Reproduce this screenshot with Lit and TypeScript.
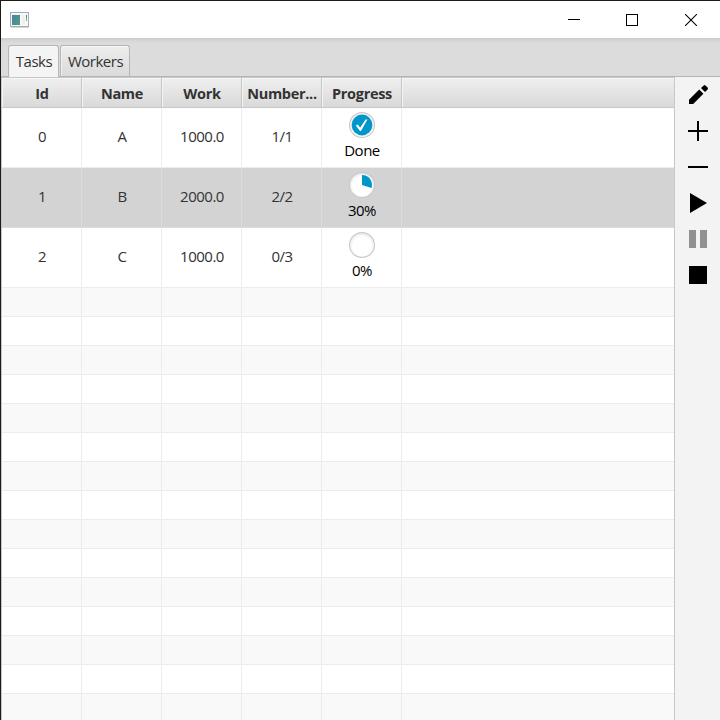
import { LitElement, html, css, svg, nothing } from "lit";
import { customElement, property } from "lit/decorators.js";

interface Task {
  id: number;
  name: string;
  work: string;
  workers: string;
  progress: number;
}

const TASKS: Task[] = [
  { id: 0, name: "A", work: "1000.0", workers: "1/1", progress: 100 },
  { id: 1, name: "B", work: "2000.0", workers: "2/2", progress: 30 },
  { id: 2, name: "C", work: "1000.0", workers: "0/3", progress: 0 },
];

const COLUMNS = ["Id", "Name", "Work", "Number...", "Progress"];
const EMPTY_ROWS = Array.from({ length: 15 }, (_, i) => i);

@customElement("progress-dial")
export class ProgressDial extends LitElement {
  @property({ type: Number }) value = 0;

  static styles = css`
    :host { display: flex; flex-direction: column; align-items: center; color: #000; }
    svg { display: block; width: 28px; height: 28px; margin-top: 3px; }
    .label { line-height: 20px; margin-top: 1px; height: 20px; }
  `;

  private sector() {
    const a = (this.value / 100) * Math.PI * 2;
    const x = 14 + 10 * Math.sin(a);
    const y = 14 - 10 * Math.cos(a);
    return `M14 14V4A10 10 0 ${this.value > 50 ? 1 : 0} 1 ${x} ${y}Z`;
  }

  render() {
    const done = this.value >= 100;
    return html`
      <svg viewBox="0 0 28 28">
        <defs>
          <radialGradient id="well" cx="14" cy="15" r="13" gradientUnits="userSpaceOnUse">
            <stop offset="0.72" stop-color="#fff" />
            <stop offset="1" stop-color="#e6e6e6" />
          </radialGradient>
        </defs>
        <circle cx="14" cy="14" r="13" fill="#c8c8c8" />
        <circle cx="14" cy="14" r="12" fill="url(#well)" />
        ${done
          ? svg`<circle cx="14" cy="14" r="10.4" fill="#0096c9" />
              <path d="M7.8 14.6L9.8 13.6L12.1 16.8L17.6 8.6H19.4L13 20H12Z" fill="#fff" />`
          : this.value > 0
            ? svg`<path d=${this.sector()} fill="#0096c9" />`
            : nothing}
      </svg>
      <span class="label">${done ? "Done" : `${this.value}%`}</span>
    `;
  }
}

@customElement("app-root")
export class AppRoot extends LitElement {
  static styles = css`
    :host {
      display: flex; flex-direction: column; box-sizing: border-box;
      width: 720px; height: 720px; overflow: hidden;
      border-top: 1px solid #1b1b1b; border-left: 1px solid #1b1b1b;
      background: #f3f3f3; color: #333;
      font: 15px "Open Sans", "Noto Sans", sans-serif; letter-spacing: -0.5px;
    }
    svg { display: block; }
    .titlebar { flex: none; height: 37px; display: flex; align-items: center; background: #fff; }
    .app-icon { margin-left: 9px; margin-right: auto; }
    .winbtn { width: 58.5px; display: flex; justify-content: center; }
    .tabs {
      flex: none; height: 39px; box-sizing: border-box; display: flex; align-items: flex-end;
      gap: 1px; padding-left: 7px; border-bottom: 1px solid #b5b5b5;
      background: linear-gradient(#cdcdcd, #dcdcdc 5px);
    }
    .tab {
      box-sizing: border-box; height: 31px; line-height: 31px; text-align: center; padding-left: 1px;
      border: 1px solid #b5b5b5; border-bottom: 0; border-radius: 3px 3px 0 0;
      background: linear-gradient(#eee, #dadada); box-shadow: inset 0 1px #f8f8f8, inset 1px 0 #f0f0f0;
    }
    .tab.active { height: 32px; margin-bottom: -1px; background: #f4f4f4; }
    .t0 { width: 51px; }
    .t1 { width: 70px; letter-spacing: -0.5px; }
    .main { flex: 1; display: flex; min-height: 0; }
    .table {
      width: 674px; box-sizing: border-box; overflow: hidden; background: #fff;
      border-left: 1px solid #c8c8c8; border-right: 1px solid #c8c8c8; border-top: 1px solid #c8c8c8;
    }
    .row { display: grid; grid-template-columns: repeat(5, 80px) 1fr; box-sizing: border-box; }
    .row > div { box-sizing: border-box; text-align: center; border-right: 1px solid #ececec; padding-left: 1px; min-width: 0; }
    .row > div:last-child { border-right: 0; }
    .head {
      height: 30px; border-bottom: 1px solid #c8c8c8; line-height: 31px; font-weight: 700;
      font-size: 14.5px;
      background: linear-gradient(#efefef, #d9d9d9);
    }
    .head > div { border-right-color: #c5c5c5; box-shadow: inset 1px 1px #f6f6f6; height: 29px; letter-spacing: -0.3px; }
    .task { height: 60px; border-bottom: 1px solid #ececec; line-height: 56px; }
    .task.selected { background: #d3d3d3; border-bottom-color: #dcdcdc; }
    .task.selected > div { border-right-color: #dcdcdc; }
    .empty { height: 29px; border-bottom: 1px solid #ececec; }
    .empty.odd { background: #f9f9f9; }
    .tools { flex: 1; display: flex; flex-direction: column; align-items: center; }
    .tools svg { width: 36px; height: 36px; }
  `;

  render() {
    return html`
      <div class="titlebar">
        <svg class="app-icon" width="20" height="16" viewBox="0 0 20 16">
          <defs>
            <linearGradient id="pane" x1="0" y1="0" x2="1" y2="1">
              <stop offset="0" stop-color="#477fa5" />
              <stop offset="1" stop-color="#4fa27b" />
            </linearGradient>
          </defs>
          <rect x="0.5" y="0.5" width="18" height="14" fill="#f7f7f7" stroke="#a6acb2" />
          <path d="M1 15.5H19" stroke="#d5d5d5" />
          <rect x="2" y="3" width="8" height="10" fill="url(#pane)" />
          <rect x="12" y="3" width="3" height="10" fill="#eff0f1" />
          <path d="M16.5 3V6" stroke="#4b8fae" />
          <path d="M16.5 6V9" stroke="#79bb91" />
        </svg>
        <div class="winbtn"><svg width="12" height="12"><path d="M0 5.5H12" stroke="#000" /></svg></div>
        <div class="winbtn"><svg width="12" height="12"><rect x="0.5" y="0.5" width="11" height="11" fill="none" stroke="#000" /></svg></div>
        <div class="winbtn"><svg width="12" height="12"><path d="M0 0L12 12M12 0L0 12" stroke="#000" stroke-width="1.05" /></svg></div>
      </div>
      <div class="tabs">
        <div class="tab active t0">Tasks</div>
        <div class="tab t1">Workers</div>
      </div>
      <div class="main">
        <div class="table">
          <div class="row head">${COLUMNS.map((c) => html`<div>${c}</div>`)}<div></div></div>
          ${TASKS.map(
            (t) => html`<div class="row task ${t.id === 1 ? "selected" : ""}">
              <div>${t.id}</div>
              <div>${t.name}</div>
              <div>${t.work}</div>
              <div>${t.workers}</div>
              <div><progress-dial .value=${t.progress}></progress-dial></div>
              <div></div>
            </div>`
          )}
          ${EMPTY_ROWS.map(
            (i) => html`<div class="row empty ${i % 2 === 0 ? "odd" : ""}">
              <div></div><div></div><div></div><div></div><div></div><div></div>
            </div>`
          )}
        </div>
        <div class="tools">
          <svg viewBox="0 0 36 36"><path d="M9 22.8V27H13.2L23.4 16.8L19.2 12.6ZM21 11L25 15L27.6 12.4Q28.4 11.4 27.6 10.6L25.4 8.4Q24.6 7.7 23.7 8.4Z" /></svg>
          <svg viewBox="0 0 36 36"><path d="M8 17H17V8H19V17H28V19H19V28H17V19H8Z" /></svg>
          <svg viewBox="0 0 36 36"><path d="M8 17H28V19H8Z" /></svg>
          <svg viewBox="0 0 36 36"><path d="M10 8L27 18L10 28Z" /></svg>
          <svg viewBox="0 0 36 36"><path d="M9 9H16V27H9ZM20 9H27V27H20Z" fill="#919191" /></svg>
          <svg viewBox="0 0 36 36"><path d="M9 9H27V27H9Z" /></svg>
        </div>
      </div>
    `;
  }
}
